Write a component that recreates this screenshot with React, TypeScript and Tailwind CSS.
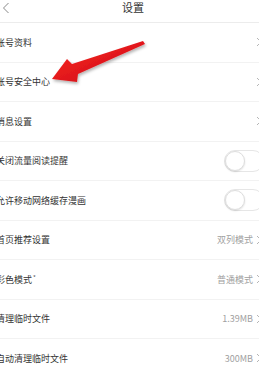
import React from "react";

type Row = {
  label: string;
  value?: string;
  toggle?: boolean;
  mark?: boolean;
};

const rows: Row[] = [
  { label: "账号资料" },
  { label: "账号安全中心" },
  { label: "消息设置" },
  { label: "关闭流量阅读提醒", toggle: true },
  { label: "允许移动网络缓存漫画", toggle: true },
  { label: "首页推荐设置", value: "双列模式" },
  { label: "彩色模式", value: "普通模式", mark: true },
  { label: "清理临时文件", value: "1.39MB" },
  { label: "自动清理临时文件", value: "300MB" },
];

function Chevron() {
  return (
    <svg width="6" height="10" viewBox="0 0 6 10" className="shrink-0">
      <path d="M1 1 L5 5 L1 9" fill="none" stroke="#b5b5b5" strokeWidth="1" />
    </svg>
  );
}

function Toggle() {
  return (
    <div className="w-[40px] h-[22px] rounded-full border border-[#e6e6e6] bg-white flex items-center">
      <div className="w-[20px] h-[20px] rounded-full bg-white border border-[#dedede] shadow-[0_1px_2px_rgba(0,0,0,0.12)]" />
    </div>
  );
}

function SettingRow({ row }: { row: Row }) {
  return (
    <div className="h-[39.5px] flex items-center justify-between border-b border-[#f2f2f2] pr-[4px]">
      <span className="text-[9px] text-[#333] leading-none">
        {row.label}
        {row.mark && <sup className="text-[6px] text-[#555] ml-[1px]">*</sup>}
      </span>
      {row.toggle ? (
        <div className="-mr-[2px]">
          <Toggle />
        </div>
      ) : (
        <div className="flex items-center gap-[3px]">
          {row.value && <span className="text-[9px] text-[#a0a0a0] leading-none">{row.value}</span>}
          <Chevron />
        </div>
      )}
    </div>
  );
}

export default function App() {
  return (
    <div
      className="relative w-[259px] h-[373px] overflow-hidden bg-white"
      style={{ fontFamily: '"Noto Sans CJK SC", "Noto Sans", sans-serif' }}
    >
      <div className="w-[270px] -ml-[4px]">
        <div className="h-[23px] relative border-b border-[#ececec]">
          <svg width="8" height="12" viewBox="0 0 8 12" className="absolute left-[6px] top-[2px]">
            <path d="M6.5 1 L1.5 6 L6.5 11" fill="none" stroke="#8a8a8a" strokeWidth="1" />
          </svg>
          <div className="text-center text-[11px] leading-[15px] text-[#333] pl-[4px]">设置</div>
        </div>
        {rows.map((r) => (
          <SettingRow key={r.label} row={r} />
        ))}
      </div>
      {/* red annotation arrow */}
      <svg
        width="259"
        height="373"
        viewBox="0 0 259 373"
        className="absolute left-0 top-0 pointer-events-none"
      >
        <defs>
          <linearGradient id="shaft" x1="0" y1="0" x2="1" y2="1">
            <stop offset="0" stopColor="#ff2626" />
            <stop offset="1" stopColor="#c60c12" />
          </linearGradient>
          <filter id="sh" x="-20%" y="-20%" width="140%" height="160%">
            <feDropShadow dx="1" dy="2" stdDeviation="1.5" floodColor="#000" floodOpacity="0.3" />
          </filter>
        </defs>
        <polygon
          points="52,79 67,59 72,64 143,41 145,44 78,74 77,82"
          fill="url(#shaft)"
          filter="url(#sh)"
        />
      </svg>
    </div>
  );
}
